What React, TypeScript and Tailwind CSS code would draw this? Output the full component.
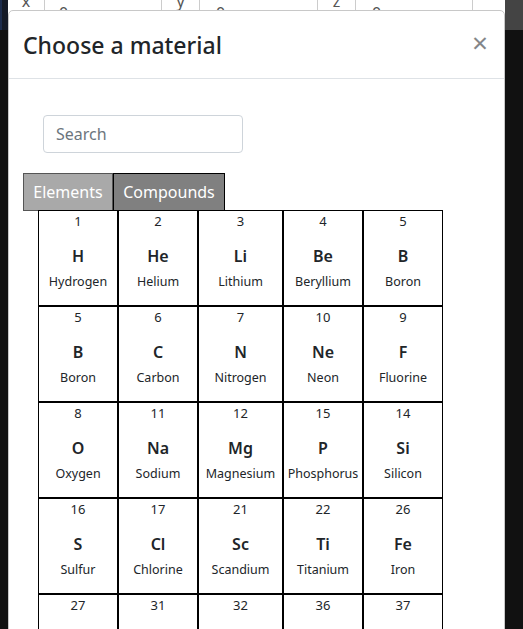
import React from 'react';

type Element = { num: number; sym: string; name: string };

const elements: Element[] = [
  { num: 1, sym: 'H', name: 'Hydrogen' },
  { num: 2, sym: 'He', name: 'Helium' },
  { num: 3, sym: 'Li', name: 'Lithium' },
  { num: 4, sym: 'Be', name: 'Beryllium' },
  { num: 5, sym: 'B', name: 'Boron' },
  { num: 5, sym: 'B', name: 'Boron' },
  { num: 6, sym: 'C', name: 'Carbon' },
  { num: 7, sym: 'N', name: 'Nitrogen' },
  { num: 10, sym: 'Ne', name: 'Neon' },
  { num: 9, sym: 'F', name: 'Fluorine' },
  { num: 8, sym: 'O', name: 'Oxygen' },
  { num: 11, sym: 'Na', name: 'Sodium' },
  { num: 12, sym: 'Mg', name: 'Magnesium' },
  { num: 15, sym: 'P', name: 'Phosphorus' },
  { num: 14, sym: 'Si', name: 'Silicon' },
  { num: 16, sym: 'S', name: 'Sulfur' },
  { num: 17, sym: 'Cl', name: 'Chlorine' },
  { num: 21, sym: 'Sc', name: 'Scandium' },
  { num: 22, sym: 'Ti', name: 'Titanium' },
  { num: 26, sym: 'Fe', name: 'Iron' },
  { num: 27, sym: 'Co', name: 'Cobalt' },
  { num: 31, sym: 'Ga', name: 'Gallium' },
  { num: 32, sym: 'Ge', name: 'Germanium' },
  { num: 36, sym: 'Kr', name: 'Krypton' },
  { num: 37, sym: 'Rb', name: 'Rubidium' },
];

function ElementCell({ el }: { el: Element }) {
  return (
    <div className="flex h-[96px] flex-col items-center border border-black bg-white text-[#212529]">
      <span className="mt-[1px] text-[13px] leading-[18px]">{el.num}</span>
      <span className="mt-[15px] text-[16px] font-semibold leading-[22px]">{el.sym}</span>
      <span className="mt-[6px] text-[12.5px] leading-[18px]">{el.name}</span>
    </div>
  );
}

export default function App() {
  return (
    <div
      className="relative h-[629px] w-[523px] overflow-hidden bg-[#111111]"
      style={{ fontFamily: '"Noto Sans", "Open Sans", sans-serif' }}
    >
      {/* Page behind the modal */}
      <div className="flex h-[30px] overflow-hidden">
        <div className="w-[8px] border-l-2 border-[#1c2c4c] bg-[#141a26]" />
        <div className="flex w-[497px] bg-white text-[16px] text-[#555]">
          <div className="w-[37px] border-r border-[#ccc] text-center leading-[12px] -mt-[5px]">x</div>
          <div className="w-[117px] border-r border-[#ccc] pl-[14px] pt-[3px] leading-[20px]">0</div>
          <div className="w-[38px] border-r border-[#ccc] text-center leading-[12px] -mt-[5px]">y</div>
          <div className="w-[118px] border-r border-[#ccc] pl-[16px] pt-[3px] leading-[20px]">0</div>
          <div className="w-[38px] border-r border-[#ccc] text-center leading-[12px] -mt-[5px]">z</div>
          <div className="w-[117px] border-r border-[#ccc] pl-[16px] pt-[3px] leading-[20px]">0</div>
          <div className="flex-1" />
        </div>
        <div className="flex-1 bg-[#444]" />
      </div>

      {/* Modal */}
      <div className="absolute left-[8px] top-[10px] h-[640px] w-[497px] rounded-t-[5px] border border-[#c8c8c8] bg-white">
        <div className="flex h-[68px] items-center justify-between border-b border-[#dee2e6] pl-[14px] pr-[16px]">
          <h5 className="text-[23px] font-medium leading-[36px] text-[#212529]">Choose a material</h5>
          <button className="-mt-[6px] text-[28px] font-normal leading-none text-[#212529] opacity-55">×</button>
        </div>
        <div className="px-[14px] pt-[36px]">
          <input
            placeholder="Search"
            className="ml-[20px] h-[38px] w-[200px] rounded-[4px] border border-[#ced4da] px-[12px] text-[16px] text-[#495057] placeholder:text-[#6c757d] outline-none"
          />
          <div className="mt-[20px] flex">
            <button className="h-[38px] w-[90px] border border-[#555] bg-[#a9a9a9] text-[16px] text-white">
              Elements
            </button>
            <button className="h-[38px] w-[112px] border border-black bg-[#808080] text-[16px] text-white">
              Compounds
            </button>
          </div>
          <div className="ml-[15px] grid -mt-[1px] grid-cols-[80px_80px_85px_80px_80px]">
            {elements.map((el, i) => (
              <ElementCell key={i} el={el} />
            ))}
          </div>
        </div>
      </div>
    </div>
  );
}
